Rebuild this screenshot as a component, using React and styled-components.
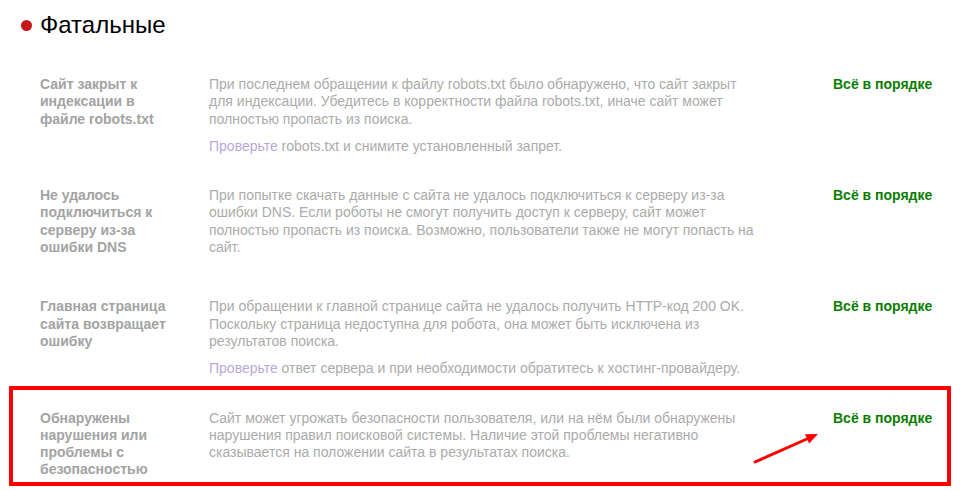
import React from "react";
import styled, { createGlobalStyle } from "styled-components";

const GlobalStyle = createGlobalStyle`
  body {
    margin: 0;
    background: #fff;
    font-family: "Liberation Sans", Arial, sans-serif;
  }
`

const Page = styled.div`
  width: 961px;
  height: 491px;
  overflow: hidden;
`

const Header = styled.h2`
  display: flex;
  align-items: center;
  gap: 8px;
  margin: 11px 0 0;
  padding-left: 21px;
  font-size: 24px;
  font-weight: normal;
  line-height: 28px;
  color: #000;
`

const Dot = styled.span`
  width: 11px;
  height: 11px;
  border-radius: 50%;
  background: #c8161d;
  flex-shrink: 0;
`

const List = styled.div`
  margin-top: 21px;
`

const Row = styled.div`
  position: relative;
  display: grid;
  grid-template-columns: 140px 595px auto;
  column-gap: 29px;
  padding: 16px 0 16px 40px;
  line-height: 17.3px;
`

const Title = styled.div`
  font-size: 14px;
  font-weight: bold;
  color: #a3a3a3;
`

const Description = styled.div`
  max-width: 550px;
  font-size: 14px;
  color: #ababab;
`

const Para = styled.p`
  margin: 0 0 10px;
`

const Hint = styled.p`
  margin: 0;
`

const Link = styled.a`
  color: #b9a8dc;
  text-decoration: none;
`

const Status = styled.div`
  font-size: 14px;
  font-weight: bold;
  color: #0a7d00;
  white-space: nowrap;
`

const Highlight = styled.div`
  position: absolute;
  left: 9px;
  top: -8px;
  width: 942px;
  height: 100px;
  box-sizing: border-box;
  border: 4px solid #ff0000;
  pointer-events: none;
`

const Arrow = styled.svg`
  position: absolute;
  left: 750px;
  top: 35px;
`

const checks = [
  {
    title: "Сайт закрыт к индексации в файле robots.txt",
    text: "При последнем обращении к файлу robots.txt было обнаружено, что сайт закрыт для индексации. Убедитесь в корректности файла robots.txt, иначе сайт может полностью пропасть из поиска.",
    hint: " robots.txt и снимите установленный запрет.",
  },
  {
    title: "Не удалось подключиться к серверу из-за ошибки DNS",
    text: "При попытке скачать данные с сайта не удалось подключиться к серверу из-за ошибки DNS. Если роботы не смогут получить доступ к серверу, сайт может полностью пропасть из поиска. Возможно, пользователи также не могут попасть на сайт.",
  },
  {
    title: "Главная страница сайта возвращает ошибку",
    text: "При обращении к главной странице сайта не удалось получить HTTP-код 200 OK. Поскольку страница недоступна для робота, она может быть исключена из результатов поиска.",
    hint: " ответ сервера и при необходимости обратитесь к хостинг-провайдеру.",
  },
  {
    title: "Обнаружены нарушения или проблемы с безопасностью",
    text: "Сайт может угрожать безопасности пользователя, или на нём были обнаружены нарушения правил поисковой системы. Наличие этой проблемы негативно сказывается на положении сайта в результатах поиска.",
    marked: true,
  },
];

const App = () => {
  return (
    <Page>
      <GlobalStyle />
      <Header>
        <Dot />
        Фатальные
      </Header>
      <List>
        {checks.map((item) => (
          <Row key={item.title}>
            <Title>{item.title}</Title>
            <Description>
              <Para>{item.text}</Para>
              {item.hint && (
                <Hint>
                  <Link href="#">Проверьте</Link>
                  {item.hint}
                </Hint>
              )}
            </Description>
            <Status>Всё в порядке</Status>
            {item.marked && (
              <>
                <Highlight />
                <Arrow width="75" height="40" viewBox="0 0 75 40">
                  <line x1="5" y1="33" x2="58" y2="9.5" stroke="#ff0000" strokeWidth="3" strokeLinecap="round" />
                  <polygon points="68,5 59.1,14.4 55,5.3" fill="#ff0000" />
                </Arrow>
              </>
            )}
          </Row>
        ))}
      </List>
    </Page>
  );
}

export default App;
